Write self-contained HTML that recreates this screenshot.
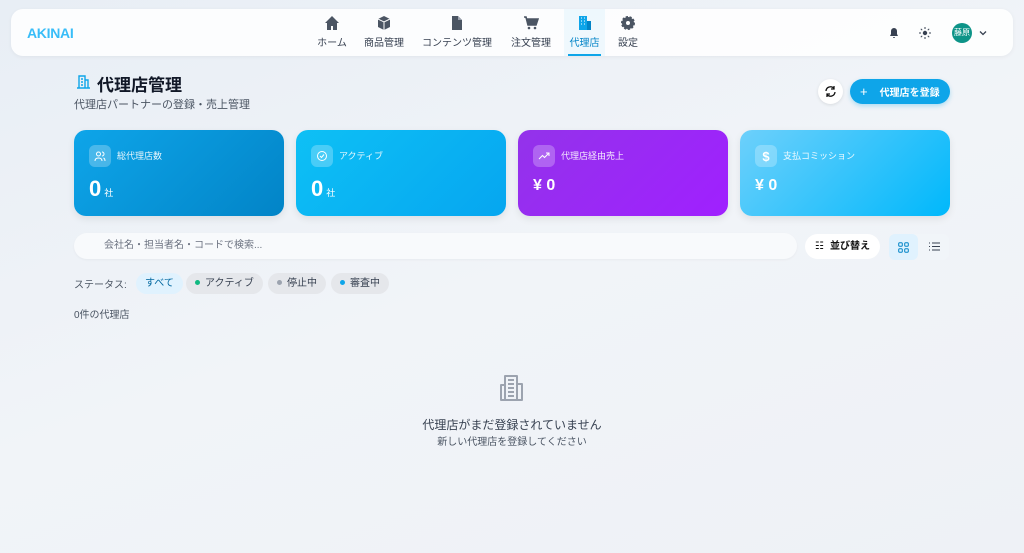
<!DOCTYPE html>
<html><head><meta charset="utf-8"><style>
*{box-sizing:border-box;margin:0;padding:0}
body{width:1024px;height:553px;overflow:hidden;background:linear-gradient(160deg,#e8eef5,#f1f4f8 50%,#eef1f6);font-family:"Liberation Sans","Noto Sans CJK JP",sans-serif;color:#1f2937;position:relative}
.nav{position:absolute;left:11px;top:9px;width:1002px;height:47px;background:rgba(255,255,255,.85);border-radius:12px;box-shadow:0 1px 4px rgba(0,0,0,.05)}
.logo{position:absolute;left:16px;top:16px;font-weight:bold;font-size:14px;color:#38bdf8;letter-spacing:-.3px}
.ni{position:absolute;top:0;height:47px;text-align:center;font-size:10px;color:#374151}
.ni svg{display:block;margin:6px auto 3px;width:16px;height:16px}
.ni.act{color:#0284c7;background:rgba(14,165,233,.06)}
.ni.act:after{content:"";position:absolute;left:4px;right:4px;bottom:0;height:2px;background:#0ea5e9}
.card{position:absolute;top:130px;width:210px;height:86px;border-radius:12px;color:#fff;box-shadow:0 3px 8px rgba(0,0,0,.08)}
.card .ic{position:absolute;left:15px;top:15px;width:22px;height:22px;border-radius:6px;background:rgba(255,255,255,.25);display:flex;align-items:center;justify-content:center}
.card .lb{position:absolute;left:43px;top:19px;font-size:9px;opacity:.9}
.card .v{position:absolute;left:15px;top:46px;font-size:22px;font-weight:bold}
.card .v small{font-size:9px;font-weight:normal;margin-left:3px}
.pill{position:absolute;top:273px;height:21px;border-radius:11px;background:#e5e7eb;font-size:10px;line-height:21px;padding:0 9px;color:#374151}
.dot{display:inline-block;width:5px;height:5px;border-radius:50%;margin-right:5px;vertical-align:1px}
</style></head><body>
<div class="nav">
<div class="logo">AKINAI</div>
<div class="ni" style="left:300px;width:42px"><svg viewBox="0 0 16 16"><path d="M8 1 1 8h2v7h4v-4h2v4h4V8h2z" fill="#4b5563"/></svg>ホーム</div>
<div class="ni" style="left:348px;width:50px"><svg viewBox="0 0 16 16"><path d="M8 1 2 4v8l6 3 6-3V4z" fill="#4b5563"/><path d="M2 4l6 3 6-3M8 7v8" stroke="#fff" stroke-width="1" fill="none"/></svg>商品管理</div>
<div class="ni" style="left:408px;width:76px"><svg viewBox="0 0 16 16"><path d="M3 1h6l4 4v10H3z" fill="#4b5563"/><path d="M9 1v4h4" fill="#9ca3af"/></svg>コンテンツ管理</div>
<div class="ni" style="left:496px;width:48px"><svg viewBox="0 0 16 16"><path d="M1 2h2l2 8h8l2-6H4" stroke="#4b5563" stroke-width="1.6" fill="#4b5563"/><circle cx="6" cy="13" r="1.3" fill="#4b5563"/><circle cx="12" cy="13" r="1.3" fill="#4b5563"/></svg>注文管理</div>
<div class="ni act" style="left:553px;width:41px"><svg viewBox="0 0 16 16"><rect x="2" y="1" width="8" height="14" fill="#0ea5e9"/><rect x="10" y="6" width="4" height="9" fill="#0284c7"/><path d="M4 3h1M7 3h1M4 6h1M7 6h1M4 9h1M7 9h1" stroke="#fff"/></svg>代理店</div>
<div class="ni" style="left:602px;width:30px"><svg viewBox="0 0 16 16"><circle cx="8" cy="8" r="6" fill="#4b5563" stroke="#4b5563" stroke-width="2" stroke-dasharray="2.2 1.5"/><circle cx="8" cy="8" r="2" fill="#fff"/></svg>設定</div>
<svg style="position:absolute;left:877px;top:18px" width="12" height="12" viewBox="0 0 12 12"><path d="M6 1a3 3 0 0 0-3 3v3L2 9h8L9 7V4a3 3 0 0 0-3-3zM5 10h2a1 1 0 0 1-2 0" fill="#374151"/></svg>
<svg style="position:absolute;left:908px;top:18px" width="12" height="12" viewBox="0 0 12 12"><circle cx="6" cy="6" r="2.2" fill="#374151"/><path d="M6 0v2M6 10v2M0 6h2M10 6h2M1.8 1.8l1.4 1.4M8.8 8.8l1.4 1.4M1.8 10.2l1.4-1.4M8.8 3.2l1.4-1.4" stroke="#374151"/></svg>
<div style="position:absolute;left:941px;top:14px;width:20px;height:20px;border-radius:50%;background:#0d9488;color:#fff;font-size:8px;line-height:20px;text-align:center">藤原</div>
<svg style="position:absolute;left:967px;top:19px" width="10" height="10" viewBox="0 0 10 10"><path d="M2 3.5l3 3 3-3" stroke="#374151" stroke-width="1.3" fill="none"/></svg>
</div>
<svg style="position:absolute;left:75px;top:74px" width="16" height="16" viewBox="0 0 16 16"><path d="M4 2h6v12H4zM10 6h3v8h-3M2 14h13M6 5h2M6 8h2M6 11h2" stroke="#0ea5e9" stroke-width="1.4" fill="none"/></svg>
<div style="position:absolute;left:97px;top:71px;font-size:17px;font-weight:bold;color:#111827">代理店管理</div>
<div style="position:absolute;left:74px;top:96px;font-size:11px;color:#4b5563">代理店パートナーの登録・売上管理</div>
<div style="position:absolute;left:818px;top:79px;width:25px;height:25px;border-radius:50%;background:#fff;box-shadow:0 1px 3px rgba(0,0,0,.1)"><svg style="margin:6px" width="13" height="13" viewBox="0 0 13 13"><path d="M2 6a4.5 4.5 0 0 1 8-2.5M11 7a4.5 4.5 0 0 1-8 2.5M10 1v3H7M3 12V9h3" stroke="#111" stroke-width="1.3" fill="none"/></svg></div>
<div style="position:absolute;left:850px;top:79px;width:100px;height:25px;border-radius:13px;background:#0ea5e9;color:#fff;font-size:10px;line-height:25px;font-weight:bold;box-shadow:0 2px 5px rgba(14,165,233,.3)"><span style="margin-left:10px;font-weight:normal;font-size:13px">+</span><span style="margin-left:12px">代理店を登録</span></div>

<div class="card" style="left:74px;background:linear-gradient(135deg,#0ea5e9,#0284c7)"><div class="ic"><svg width="12" height="12" viewBox="0 0 12 12"><circle cx="4.5" cy="4" r="2" stroke="#fff" fill="none"/><path d="M1 11c0-2 1.5-3 3.5-3S8 9 8 11M8 2a2 2 0 0 1 0 4M9.5 8c1 .4 1.5 1.5 1.5 3" stroke="#fff" fill="none"/></svg></div><div class="lb">総代理店数</div><div class="v">0<small>社</small></div></div>
<div class="card" style="left:296px;background:linear-gradient(135deg,#0ec0f5,#06a6f0)"><div class="ic"><svg width="12" height="12" viewBox="0 0 12 12"><circle cx="6" cy="6" r="4.5" stroke="#fff" fill="none"/><path d="M4 6l1.5 1.5L8 4.5" stroke="#fff" fill="none"/></svg></div><div class="lb">アクティブ</div><div class="v">0<small>社</small></div></div>
<div class="card" style="left:518px;background:linear-gradient(135deg,#9333ea,#a020ff)"><div class="ic"><svg width="12" height="12" viewBox="0 0 12 12"><path d="M1 9l3.5-3.5 2 2L11 3M8 3h3v3" stroke="#fff" fill="none"/></svg></div><div class="lb">代理店経由売上</div><div class="v" style="font-size:16px;top:47px">¥&nbsp;0</div></div>
<div class="card" style="left:740px;background:linear-gradient(135deg,#6dd0fb,#00b8fb)"><div class="ic" style="font-size:13px;font-weight:bold">$</div><div class="lb">支払コミッション</div><div class="v" style="font-size:16px;top:47px">¥&nbsp;0</div></div>

<div style="position:absolute;left:74px;top:233px;width:723px;height:26px;border-radius:13px;background:#f8fafc;box-shadow:0 1px 2px rgba(0,0,0,.04);font-size:10px;color:#6b7280;line-height:26px;padding-left:30px">会社名・担当者名・コードで検索...</div>
<div style="position:absolute;left:805px;top:234px;width:75px;height:25px;border-radius:13px;background:#fff;font-size:10px;font-weight:bold;line-height:25px;color:#111"><span style="margin-left:10px;font-weight:normal">☷</span><span style="margin-left:6px">並び替え</span></div>
<div style="position:absolute;left:889px;top:234px;width:60px;height:26px;border-radius:6px;background:#f1f5f9"></div>
<div style="position:absolute;left:889px;top:234px;width:29px;height:26px;border-radius:6px;background:#e0f2fe"><svg style="margin:8px 9px" width="11" height="11" viewBox="0 0 11 11"><rect x=".7" y=".7" width="3.6" height="3.6" rx="1" stroke="#0284c7" fill="none"/><rect x="6.7" y=".7" width="3.6" height="3.6" rx="1" stroke="#0284c7" fill="none"/><rect x=".7" y="6.7" width="3.6" height="3.6" rx="1" stroke="#0284c7" fill="none"/><rect x="6.7" y="6.7" width="3.6" height="3.6" rx="1" stroke="#0284c7" fill="none"/></svg></div>
<svg style="position:absolute;left:929px;top:241px" width="11" height="11" viewBox="0 0 11 11"><path d="M0 2h1M3 2h8M0 5.5h1M3 5.5h8M0 9h1M3 9h8" stroke="#374151"/></svg>

<div style="position:absolute;left:74px;top:276px;font-size:10px;color:#4b5563">ステータス:</div>
<div class="pill" style="left:136px;background:#e0f2fe;color:#0369a1">すべて</div>
<div class="pill" style="left:186px"><span class="dot" style="background:#10b981"></span>アクティブ</div>
<div class="pill" style="left:268px"><span class="dot" style="background:#9ca3af"></span>停止中</div>
<div class="pill" style="left:331px"><span class="dot" style="background:#0ea5e9"></span>審査中</div>
<div style="position:absolute;left:74px;top:306px;font-size:10px;color:#4b5563">0件の代理店</div>

<svg style="position:absolute;left:496px;top:372px" width="32" height="32" viewBox="0 0 32 32"><path d="M9 4h12v24H9zM21 12h5v16h-5M9 13H5v15h4M12 8h6M12 12h6M12 16h6M12 20h6M12 24h6" stroke="#9ca3af" stroke-width="2" fill="none" stroke-linejoin="round"/></svg>
<div style="position:absolute;left:0;width:1024px;top:416px;text-align:center;font-size:12px;color:#374151">代理店がまだ登録されていません</div>
<div style="position:absolute;left:0;width:1024px;top:433px;text-align:center;font-size:10px;color:#4b5563">新しい代理店を登録してください</div>
</body></html>
